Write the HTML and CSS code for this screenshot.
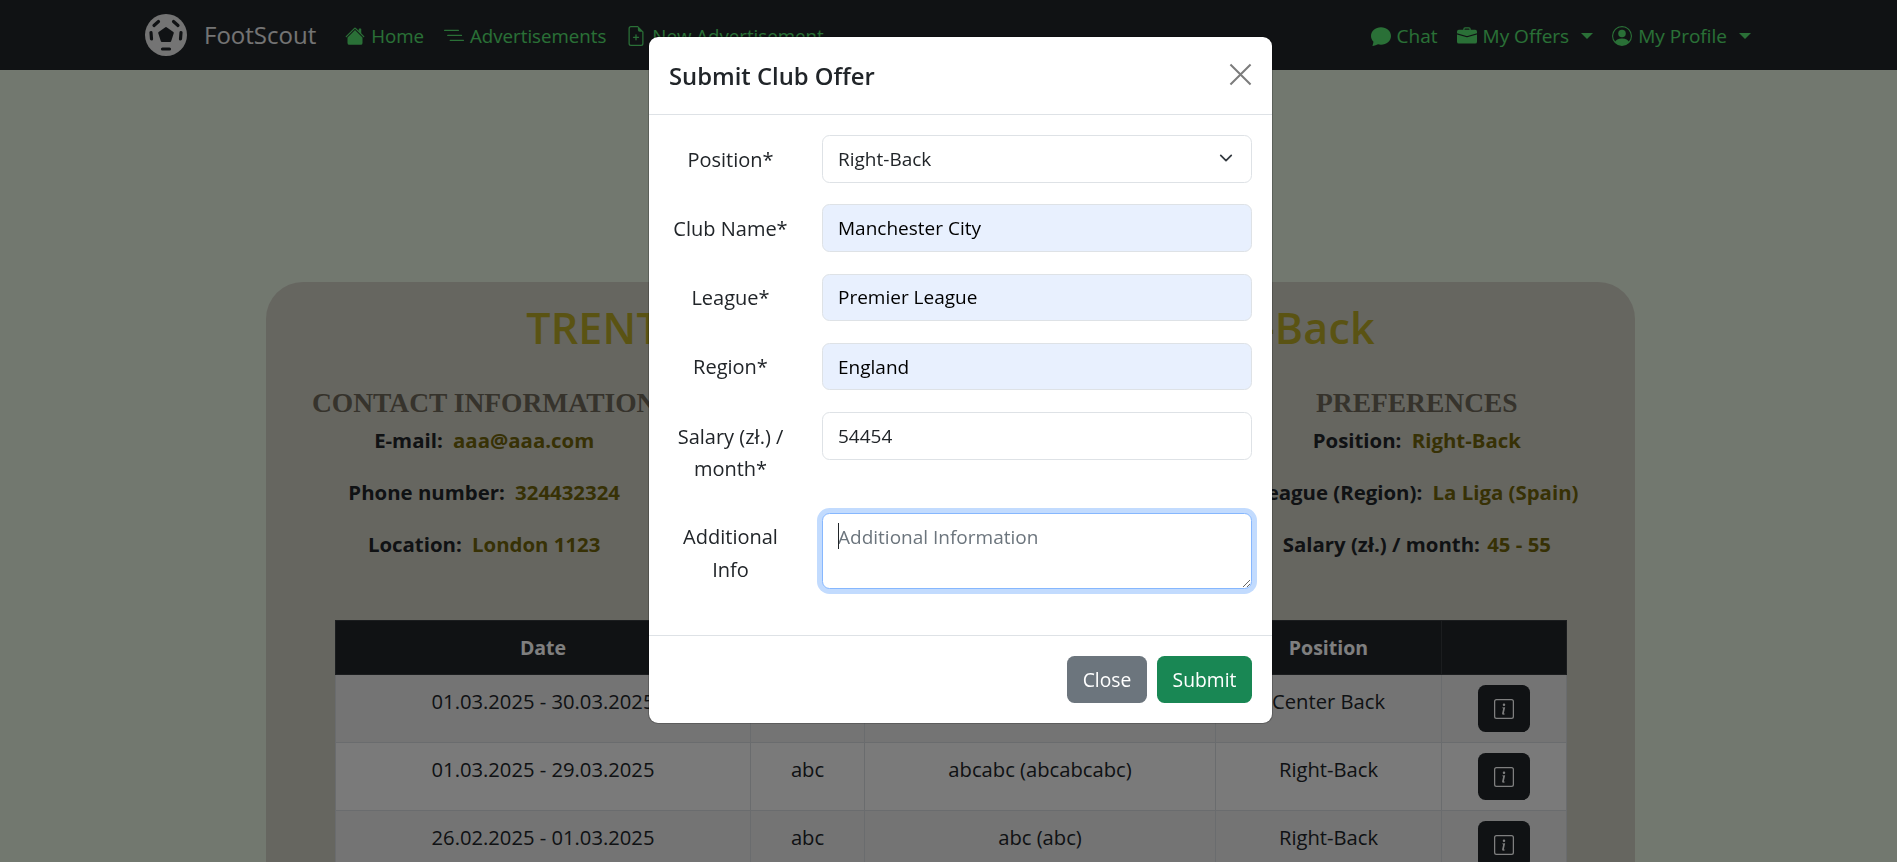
FILE: index.html
```html
<!DOCTYPE html>
<html lang="en">
<head>
  <meta charset="UTF-8">
  <title>FootScout</title>
  <link rel="stylesheet" href="styles.css">
</head>
<body>
  <nav class="navbar">
    <div class="nav-left">
      <a class="brand">
        <svg class="brand-logo" viewBox="0 0 42 42">
          <circle cx="21" cy="21" r="21" fill="currentColor"/>
          <path d="M21 14l6.800 4.900-2.600 8h-8.400l-2.600-8z" fill="#212529" stroke="#212529" stroke-width="2" stroke-linejoin="round"/>
          <path d="M9 11.500l4.500-4M28.500 7.500l4.500 4M36 18.500l-.5 6.500M6 18.500l.5 6.500M17.500 35h7" stroke="#212529" stroke-width="3.200" stroke-linecap="round" fill="none"/>
        </svg>
        <span>FootScout</span>
      </a>
      <a class="nav-link">
        <svg viewBox="0 0 16 16" fill="currentColor"><path d="M8.707 1.500a1 1 0 0 0-1.414 0L.646 8.146a.5.5 0 0 0 .708.708L8 2.207l6.646 6.647a.5.5 0 0 0 .708-.708L13 5.793V2.500a.5.5 0 0 0-.5-.5h-1a.5.5 0 0 0-.5.5v1.293z"/><path d="m8 3.293 6 6V13.500a1.500 1.500 0 0 1-1.500 1.500h-9A1.500 1.500 0 0 1 2 13.500V9.293z"/></svg>
        Home
      </a>
      <a class="nav-link">
        <svg viewBox="0 0 16 16" fill="none" stroke="currentColor" stroke-width="1" stroke-linecap="round"><path d="M0.500 3.500h11M3 7.500h11M5 11.500h10.500"/></svg>
        Advertisements
      </a>
      <a class="nav-link">
        <svg viewBox="0 0 16 16" fill="currentColor"><path d="M8 6.500a.5.5 0 0 1 .5.5v1.500H10a.5.5 0 0 1 0 1H8.500V11a.5.5 0 0 1-1 0V9.500H6a.5.5 0 0 1 0-1h1.500V7a.5.5 0 0 1 .5-.5"/><path d="M14 4.500V14a2 2 0 0 1-2 2H4a2 2 0 0 1-2-2V2a2 2 0 0 1 2-2h5.500zm-3 0A1.500 1.500 0 0 1 9.500 3V1H4a1 1 0 0 0-1 1v12a1 1 0 0 0 1 1h8a1 1 0 0 0 1-1V4.500z"/></svg>
        New Advertisement
      </a>
    </div>
    <div class="nav-right">
      <a class="nav-link">
        <svg viewBox="0 0 16 16" fill="currentColor"><path d="M8 15c4.418 0 8-3.134 8-7s-3.582-7-8-7-8 3.134-8 7c0 1.760.743 3.370 1.970 4.600-.097 1.016-.417 2.130-.771 2.966-.079.186.074.394.273.362 2.256-.37 3.597-.938 4.180-1.234A9 9 0 0 0 8 15"/></svg>
        Chat
      </a>
      <a class="nav-link">
        <svg viewBox="0 0 16 16" fill="currentColor"><path d="M6.500 1A1.500 1.500 0 0 0 5 2.500V3H1.500A1.500 1.500 0 0 0 0 4.500v1.384l7.614 2.030a1.500 1.500 0 0 0 .772 0L16 5.884V4.500A1.500 1.500 0 0 0 14.500 3H11v-.5A1.500 1.500 0 0 0 9.500 1zm0 1h3a.5.5 0 0 1 .5.5V3H6v-.5a.5.5 0 0 1 .5-.5"/><path d="M0 12.500A1.500 1.500 0 0 0 1.500 14h13a1.500 1.500 0 0 0 1.500-1.500V6.850L8.129 8.947a.5.5 0 0 1-.258 0L0 6.850z"/></svg>
        My Offers
        <i class="caret"></i>
      </a>
      <a class="nav-link">
        <svg viewBox="0 0 16 16" fill="currentColor"><path d="M11 6a3 3 0 1 1-6 0 3 3 0 0 1 6 0"/><path fill-rule="evenodd" d="M0 8a8 8 0 1 1 16 0A8 8 0 0 1 0 8m8-7a7 7 0 0 0-5.468 11.370C3.242 11.226 4.805 10 8 10s4.757 1.225 5.468 2.370A7 7 0 0 0 8 1"/></svg>
        My Profile
        <i class="caret"></i>
      </a>
    </div>
  </nav>

  <main class="player-card">
    <h1 class="player-name">TRENT ALEXANDER-ARNOLD - Right-Back</h1>
    <div class="info-row">
      <section class="info-col">
        <h3>CONTACT INFORMATION</h3>
        <p>E-mail: <span>aaa@aaa.com</span></p>
        <p>Phone number: <span>324432324</span></p>
        <p>Location: <span>London 1123</span></p>
      </section>
      <section class="info-col"></section>
      <section class="info-col">
        <h3>PREFERENCES</h3>
        <p>Position: <span>Right-Back</span></p>
        <p>League (Region): <span>La Liga (Spain)</span></p>
        <p>Salary (zł.) / month: <span class="tight">45 - 55</span></p>
      </section>
    </div>

    <table class="offers">
      <thead>
        <tr><th class="c-date">Date</th><th class="c-club">Club</th><th class="c-league">League (Region)</th><th class="c-pos">Position</th><th class="c-btn"></th></tr>
      </thead>
      <tbody>
        <tr>
          <td>01.03.2025 - 30.03.2025</td><td>abc</td><td>abc (abc)</td><td>Center Back</td>
          <td><button class="info-btn"><svg viewBox="0 0 16 16" fill="currentColor"><path d="M14 1a1 1 0 0 1 1 1v12a1 1 0 0 1-1 1H2a1 1 0 0 1-1-1V2a1 1 0 0 1 1-1zM2 0a2 2 0 0 0-2 2v12a2 2 0 0 0 2 2h12a2 2 0 0 0 2-2V2a2 2 0 0 0-2-2z"/><path d="m8.930 6.588-2.290.287-.082.380.450.083c.294.070.352.176.288.469l-.738 3.468c-.194.897.105 1.319.808 1.319.545 0 1.178-.252 1.465-.598l.088-.416c-.2.176-.492.246-.686.246-.275 0-.375-.193-.304-.533zM9 4.500a1 1 0 1 1-2 0 1 1 0 0 1 2 0"/></svg></button></td>
        </tr>
        <tr>
          <td>01.03.2025 - 29.03.2025</td><td>abc</td><td>abcabc (abcabcabc)</td><td>Right-Back</td>
          <td><button class="info-btn"><svg viewBox="0 0 16 16" fill="currentColor"><path d="M14 1a1 1 0 0 1 1 1v12a1 1 0 0 1-1 1H2a1 1 0 0 1-1-1V2a1 1 0 0 1 1-1zM2 0a2 2 0 0 0-2 2v12a2 2 0 0 0 2 2h12a2 2 0 0 0 2-2V2a2 2 0 0 0-2-2z"/><path d="m8.930 6.588-2.290.287-.082.380.450.083c.294.070.352.176.288.469l-.738 3.468c-.194.897.105 1.319.808 1.319.545 0 1.178-.252 1.465-.598l.088-.416c-.2.176-.492.246-.686.246-.275 0-.375-.193-.304-.533zM9 4.500a1 1 0 1 1-2 0 1 1 0 0 1 2 0"/></svg></button></td>
        </tr>
        <tr>
          <td>26.02.2025 - 01.03.2025</td><td>abc</td><td>abc (abc)</td><td>Right-Back</td>
          <td><button class="info-btn"><svg viewBox="0 0 16 16" fill="currentColor"><path d="M14 1a1 1 0 0 1 1 1v12a1 1 0 0 1-1 1H2a1 1 0 0 1-1-1V2a1 1 0 0 1 1-1zM2 0a2 2 0 0 0-2 2v12a2 2 0 0 0 2 2h12a2 2 0 0 0 2-2V2a2 2 0 0 0-2-2z"/><path d="m8.930 6.588-2.290.287-.082.380.450.083c.294.070.352.176.288.469l-.738 3.468c-.194.897.105 1.319.808 1.319.545 0 1.178-.252 1.465-.598l.088-.416c-.2.176-.492.246-.686.246-.275 0-.375-.193-.304-.533zM9 4.500a1 1 0 1 1-2 0 1 1 0 0 1 2 0"/></svg></button></td>
        </tr>
      </tbody>
    </table>
  </main>

  <div class="backdrop"></div>

  <div class="modal-wrap">
    <div class="modal">
      <div class="modal-header">
        <h5>Submit Club Offer</h5>
        <svg class="modal-close" viewBox="0 0 16 16" fill="none" stroke="currentColor" stroke-width="1.400"><path d="M1 1l14 14M15 1L1 15"/></svg>
      </div>
      <form class="modal-body">
        <label>Position*</label>
        <div class="select-wrap">
          <select class="field">
            <option>Right-Back</option>
          </select>
          <svg viewBox="0 0 16 16" fill="none" stroke="currentColor" stroke-width="2" stroke-linecap="round" stroke-linejoin="round"><path d="M2 5l6 6 6-6"/></svg>
        </div>
        <label>Club Name*</label>
        <input class="field autofilled" value="Manchester City">
        <label>League*</label>
        <input class="field autofilled" value="Premier League">
        <label>Region*</label>
        <input class="field autofilled" value="England">
        <label>Salary (zł.) /<br>month*</label>
        <input class="field" value="54454">
        <label>Additional<br>Info</label>
        <div class="area-wrap">
          <textarea class="field focused" placeholder="Additional Information"></textarea>
          <span class="text-caret"></span>
        </div>
      </form>
      <div class="modal-footer">
        <button class="btn btn-close">Close</button>
        <button class="btn btn-submit">Submit</button>
      </div>
    </div>
  </div>
</body>
</html>
```

FILE: styles.css
```css
html, body {
  overflow: hidden;
  height: 100%;
}
body {
  margin: 0;
  font-family: "Open Sans", "Noto Sans", sans-serif;
  font-size: 19px;
  line-height: 32px;
  color: #212529;
  background-color: #e4f0df;
}
.navbar {
  height: 70px;
  box-sizing: border-box;
  background-color: #212529;
  display: flex;
  align-items: center;
  justify-content: space-between;
  padding: 2px 146px 0 145px;
}
.nav-left, .nav-right {
  display: flex;
  align-items: center;
  gap: 20px;
}
.nav-left .nav-link {
  font-size: 18.700px;
}
.nav-right {
  gap: 19px;
}
.brand {
  display: flex;
  align-items: center;
  gap: 17px;
  color: #e8e8e8;
  font-size: 24px;
  margin: -2px 9px 0 0;
}
.brand-logo {
  width: 42px;
  height: 42px;
}
.nav-link {
  display: flex;
  align-items: center;
  gap: 6px;
  color: #54e06e;
}
.nav-link svg {
  width: 20px;
  height: 20px;
}
.caret {
  width: 0;
  height: 0;
  margin-left: 6px;
  border-top: 6px solid currentColor;
  border-left: 6px solid transparent;
  border-right: 6px solid transparent;
}
.player-card {
  width: 1369px;
  margin: 212px 0 0 266px;
  padding-top: 19px;
  background-color: #cdccc0;
  border-radius: 37px 37px 0 0;
  height: 600px;
  box-sizing: border-box;
}
.player-name {
  margin: 0;
  text-align: center;
  font-size: 43px;
  line-height: 54px;
  font-weight: 600;
  letter-spacing: 0.2px;
  color: #b5a726;
}
.info-row {
  display: grid;
  grid-template-columns: repeat(3, 1fr);
  margin: 31px -15px 0;
}
.info-col {
  text-align: center;
}
.info-col h3 {
  margin: 0 0 4px;
  font-family: "Liberation Serif", serif;
  font-size: 27.500px;
  line-height: 34px;
  color: #6c6759;
}
.info-col p {
  margin: 0 0 20px;
  font-size: 20.400px;
  font-weight: 700;
  color: #212529;
}
.info-col p span {
  margin-left: 5px;
  color: #6e620a;
}
.info-col p span.tight {
  margin-left: 2px;
}
.offers {
  width: 1232px;
  margin: 40px 0 0 69px;
  border-collapse: collapse;
  table-layout: fixed;
  text-align: center;
  font-size: 20.200px;
}
.offers th {
  height: 53px;
  padding: 0;
  font-size: 19.500px;
  background-color: #212529;
  color: #fff;
  border: 1px solid #373b3e;
}
.c-date { width: 414px; }
.c-club { width: 113px; }
.c-league { width: 350px; }
.c-pos { width: 225px; }
.offers td {
  height: 68px;
  box-sizing: border-box;
  padding: 10px;
  vertical-align: top;
  border: 1px solid #d4d8dc;
  background-color: #f4f4f4;
}
.offers tbody tr:nth-child(odd) td {
  background-color: #e8e8e8;
}
.info-btn {
  display: inline-flex;
  align-items: center;
  justify-content: center;
  width: 52px;
  height: 47px;
  padding: 0;
  border: none;
  border-radius: 7.500px;
  background-color: #212529;
  color: #fff;
  vertical-align: top;
}
.info-btn svg {
  width: 20px;
  height: 20px;
}
.backdrop {
  position: fixed;
  inset: 0;
  background-color: rgba(0, 0, 0, 0.5);
}
.modal-wrap {
  position: fixed;
  inset: 0;
  display: flex;
  justify-content: center;
  align-items: flex-start;
  padding: 36px 0 0 24px;
}
.modal {
  width: 625px;
  box-sizing: border-box;
  background-color: #fff;
  border: 1px solid rgba(0, 0, 0, 0.2);
  border-radius: 10px;
  background-clip: padding-box;
}
.modal-header {
  height: 77px;
  display: flex;
  align-items: center;
  justify-content: space-between;
  padding: 0 20px;
  border-bottom: 1px solid #dee2e6;
}
.modal-header h5 {
  margin: 0;
  font-size: 23.800px;
  font-weight: 600;
}
.modal-close {
  width: 23px;
  height: 23px;
  margin-top: -2px;
  color: #7c7c7c;
}
.modal-body {
  display: grid;
  grid-template-columns: 123px 1fr;
  column-gap: 30px;
  row-gap: 21.750px;
  padding: 20px 20px 43.250px;
}
.modal-body label {
  padding: 8.500px 0 5.500px;
  line-height: 32.500px;
  font-size: 20px;
  text-align: center;
}
.field {
  display: block;
  width: 100%;
  height: 47.500px;
  box-sizing: border-box;
  padding: 0 15px;
  border: 1px solid #dee2e6;
  border-radius: 7.500px;
  font: inherit;
  color: #212529;
  background-color: #fff;
  outline: none;
  appearance: none;
}
.autofilled {
  background-color: #e8f0fe;
  color: #000;
}
.select-wrap, .area-wrap {
  position: relative;
}
.select-wrap svg {
  position: absolute;
  right: 19px;
  top: 16px;
  width: 14px;
  height: 14px;
  color: #343a40;
}
textarea.field {
  height: 76px;
  padding: 7px 15px;
  resize: vertical;
}
.focused {
  border-color: #86b7fe;
  box-shadow: 0 0 0 5px #c2dbfe;
}
.text-caret {
  position: absolute;
  left: 16px;
  top: 10px;
  width: 1px;
  height: 26px;
  background-color: #212529;
}
textarea::placeholder {
  color: #6c757d;
  opacity: 1;
}
.modal-footer {
  height: 87px;
  display: flex;
  align-items: center;
  justify-content: flex-end;
  gap: 10px;
  padding: 0 20px;
  border-top: 1px solid #dee2e6;
}
.btn {
  height: 47px;
  padding: 0 15px;
  border: none;
  border-radius: 7.500px;
  font: inherit;
  font-size: 19.300px;
  color: #fff;
}
.btn-close {
  width: 80px;
  background-color: #6c757d;
}
.btn-submit {
  width: 95px;
  background-color: #198754;
}
```
